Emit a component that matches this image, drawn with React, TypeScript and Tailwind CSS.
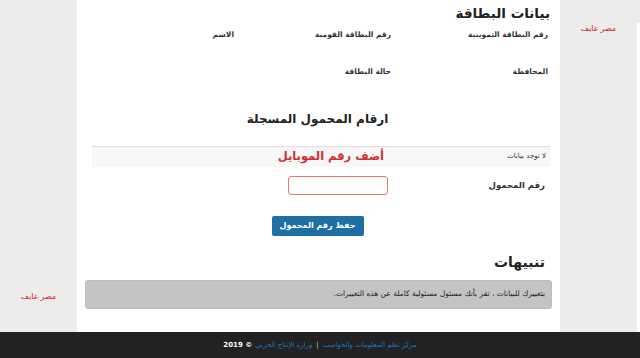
export default function App() {
  const font = { fontFamily: '"DejaVu Sans", "Noto Sans", sans-serif' };
  return (
    <div className="flex h-[358px] w-[640px] flex-col overflow-hidden bg-[#ececec]" style={font}>
      <div className="flex flex-1">
        {/* left side column */}
        <div className="flex w-[77px] shrink-0 flex-col justify-end pb-[29px]">
          <p dir="rtl" className="text-center text-[8px] text-[#d8262b]">مصر غايف</p>
        </div>

        {/* main content */}
        <main dir="rtl" className="w-[483px] shrink-0 bg-white pr-[10px] pl-[8px]">
          <h1 className="pt-[2px] text-[13.5px] font-bold leading-[22px] text-[#222]">بيانات البطاقة</h1>

          <div className="mt-[5px] grid grid-cols-[157px_157px_1fr] pr-[2px] text-[7.5px] font-bold text-[#333]">
            <span>رقم البطاقة التموينية</span>
            <span>رقم البطاقة القومية</span>
            <span>الاسم</span>
          </div>
          <div className="mt-[26px] grid grid-cols-[157px_157px_1fr] pr-[2px] text-[7.5px] font-bold text-[#333]">
            <span>المحافظة</span>
            <span>حالة البطاقة</span>
          </div>

          <h2 className="mt-[33px] text-center text-[12px] font-bold leading-[16px] text-[#222]">ارقام المحمول المسجلة</h2>

          <div className="mt-[19px] ml-[7px] flex h-[21px] items-center border-t border-[#dddddd] bg-[#f7f7f7] pr-[4px]">
            <span className="w-[162px] text-[7px] text-[#333]">لا توجد بيانات</span>
            <span className="text-[11.5px] font-bold leading-none text-[#d22e2e]">أضف رقم الموبايل</span>
          </div>

          <div className="mt-[9px] flex items-center">
            <label className="w-[162px] pr-[5px] text-[8.5px] font-bold text-[#333]">رقم المحمول</label>
            <input className="h-[19px] w-[100px] rounded-[3px] border border-[#e07a7a] bg-white" />
          </div>

          <div className="mt-[21px] flex justify-center">
            <button className="h-[20px] w-[92px] rounded-[2px] bg-[#1f6fa3] text-[8px] font-bold text-white">
              حفظ رقم المحمول
            </button>
          </div>

          <h3 className="mt-[16px] pr-[5px] text-[14px] font-bold leading-[20px] text-[#222]">تنبيهات</h3>

          <div className="mt-[8px] -mr-[2px] ml-0 flex h-[29px] items-center rounded-[3px] border border-[#bdbdbd] bg-[#c4c4c4] pr-[6px]">
            <p className="text-[7.5px] text-[#222]">بتغييرك للبيانات ، تقر بأنك مسئول مسئولية كاملة عن هذه التغييرات.</p>
          </div>
        </main>

        {/* right side column */}
        <div className="flex flex-1 pt-[23px]">
          <div className="flex-1">
            <p dir="rtl" className="text-center text-[8px] text-[#d8262b]">مصر غايف</p>
          </div>
          <div className="w-[3px] bg-white" />
        </div>
      </div>

      <footer dir="rtl" className="flex h-[26px] shrink-0 items-center justify-center bg-[#222222] text-[7px]">
        <span className="text-[#1b75bb]">مركز نظم المعلومات والحواسب</span>
        <span className="mx-[4px] text-[#ccc]">|</span>
        <span className="text-[#1b75bb]">وزارة الإنتاج الحربي</span>
        <span className="mr-[3px] font-bold text-white">© 2019</span>
      </footer>
    </div>
  );
}
